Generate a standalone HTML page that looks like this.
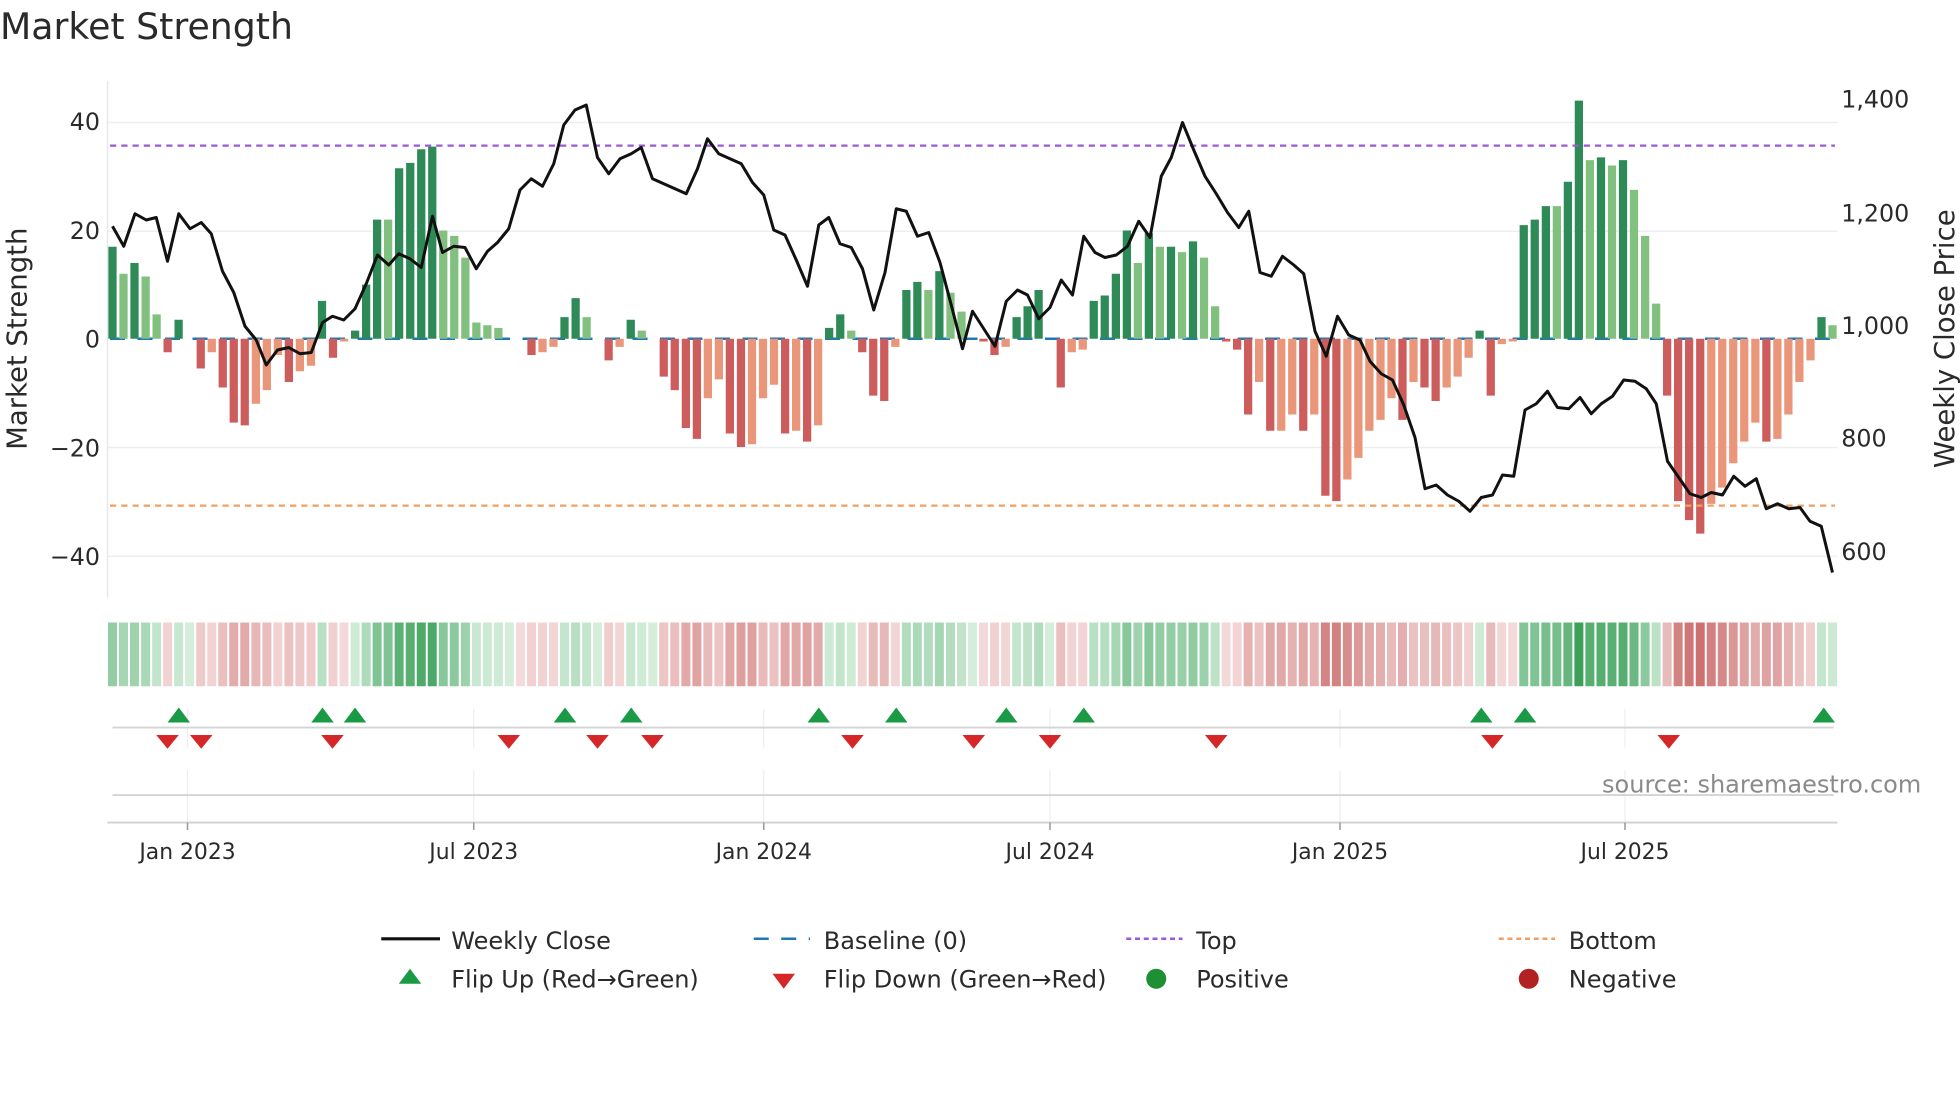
<!DOCTYPE html>
<html><head><meta charset="utf-8">
<style>
html,body{margin:0;padding:0;background:#fff;width:1960px;height:1102px;overflow:hidden}
svg{display:block}
text{font-family:"DejaVu Sans","Liberation Sans",sans-serif;fill:#2a2a2a}
</style></head>
<body>
<svg id="c" width="1960" height="1102" viewBox="0 0 1568 881.6" xmlns="http://www.w3.org/2000/svg">
<rect width="1568" height="882" fill="#fff"/>
<text x="0" y="31" font-size="29" fill="#333">Market Strength</text>
<g stroke="#eceff2" stroke-width="1.2">
<line x1="86" y1="98" x2="1470" y2="98"/><line x1="86" y1="185" x2="1470" y2="185"/>
<line x1="86" y1="358" x2="1470" y2="358"/><line x1="86" y1="445" x2="1470" y2="445"/>
</g>
<line x1="86" y1="65" x2="86" y2="478" stroke="#e6e8ea" stroke-width="1.2"/>
<g font-size="19" text-anchor="end">
<text x="80" y="104">40</text><text x="80" y="191">20</text><text x="80" y="278">0</text>
<text x="80" y="365">−20</text><text x="80" y="452">−40</text>
</g>
<g font-size="19">
<text x="1473" y="86">1,400</text><text x="1473" y="177">1,200</text><text x="1473" y="267">1,000</text>
<text x="1473" y="357">800</text><text x="1473" y="448">600</text>
</g>
<text transform="translate(21,271) rotate(-90)" font-size="22" text-anchor="middle">Market Strength</text>
<text transform="translate(1563,271) rotate(-90)" font-size="22" text-anchor="middle">Weekly Close Price</text>
<line x1="88" y1="271" x2="1468" y2="271" stroke="#1f77b4" stroke-width="2" stroke-dasharray="12 10"/>
<g id="bars"></g>
<line x1="88" y1="116.5" x2="1468" y2="116.5" stroke="#9b59d6" stroke-width="1.8" stroke-dasharray="5 4"/>
<line x1="88" y1="404.5" x2="1468" y2="404.5" stroke="#f0a060" stroke-width="1.8" stroke-dasharray="5 4"/>
<polyline id="price" fill="none" stroke="#111" stroke-width="2.4" stroke-linejoin="round"/>
<g id="heat"></g>
<g stroke="#eceff2" stroke-width="1">
<line x1="150" y1="567" x2="150" y2="598"/><line x1="379" y1="567" x2="379" y2="598"/><line x1="611" y1="567" x2="611" y2="598"/><line x1="840" y1="567" x2="840" y2="598"/><line x1="1072" y1="567" x2="1072" y2="598"/><line x1="1300" y1="567" x2="1300" y2="598"/>
<line x1="150" y1="616" x2="150" y2="658"/><line x1="379" y1="616" x2="379" y2="658"/><line x1="611" y1="616" x2="611" y2="658"/><line x1="840" y1="616" x2="840" y2="658"/><line x1="1072" y1="616" x2="1072" y2="658"/><line x1="1300" y1="616" x2="1300" y2="658"/>
</g>
<line x1="90" y1="582" x2="1467" y2="582" stroke="#d4d4d4" stroke-width="1.5"/>
<line x1="90" y1="636" x2="1467" y2="636" stroke="#d4d4d4" stroke-width="1.5"/>
<line x1="86" y1="658" x2="1470" y2="658" stroke="#d0d0d0" stroke-width="1.5"/>
<g id="tri"></g>
<g stroke="#999" stroke-width="1.2">
<line x1="150" y1="658" x2="150" y2="664"/><line x1="379" y1="658" x2="379" y2="664"/><line x1="611" y1="658" x2="611" y2="664"/><line x1="840" y1="658" x2="840" y2="664"/><line x1="1072" y1="658" x2="1072" y2="664"/><line x1="1300" y1="658" x2="1300" y2="664"/>
</g>
<g font-size="17.5" text-anchor="middle">
<text x="150" y="687">Jan 2023</text><text x="379" y="687">Jul 2023</text><text x="611" y="687">Jan 2024</text><text x="840" y="687">Jul 2024</text><text x="1072" y="687">Jan 2025</text><text x="1300" y="687">Jul 2025</text>
</g>
<text x="1537" y="634" font-size="19.2" text-anchor="end" style="fill:#8a8a8a">source: sharemaestro.com</text>
<g font-size="19.2">
<line x1="305" y1="751" x2="352" y2="751" stroke="#111" stroke-width="2.5"/><text x="361" y="759">Weekly Close</text>
<line x1="603" y1="751" x2="648" y2="751" stroke="#1f77b4" stroke-width="2" stroke-dasharray="12 10"/><text x="659" y="759">Baseline (0)</text>
<line x1="901" y1="751" x2="946" y2="751" stroke="#9b59d6" stroke-width="2" stroke-dasharray="4 3"/><text x="957" y="759">Top</text>
<line x1="1199" y1="751" x2="1244" y2="751" stroke="#f0a060" stroke-width="2" stroke-dasharray="4 3"/><text x="1255" y="759">Bottom</text>
<polygon points="328,775 319,787 337,787" fill="#1a9a45"/><text x="361" y="790">Flip Up (Red→Green)</text>
<polygon points="618,779 636,779 627,791" fill="#d62728"/><text x="659" y="790">Flip Down (Green→Red)</text>
<circle cx="925" cy="783" r="8" fill="#1f8f33"/><text x="957" y="790">Positive</text>
<circle cx="1223" cy="783" r="8" fill="#b22222"/><text x="1255" y="790">Negative</text>
</g>
</svg>
<script>
var d="D17 L12 D14 L11.5 L4.5 R-2.5 D3.5 Z0 R-5.5 O-2.5 R-9 R-15.5 R-16 O-12 O-9.5 O-3 R-8 O-6 O-5 D7 R-3.5 O-0.5 D1.5 D10 D22 L22 D31.5 D32.5 D35 D35.5 L20 L19 L15 L3 L2.5 L2 Z0 Z0 R-3 O-2.5 O-1.5 D4 D7.5 L4 Z0 R-4 O-1.5 D3.5 L1.5 Z0 R-7 R-9.5 R-16.5 R-18.5 O-11 O-7.5 R-17.5 R-20 O-19.5 O-11 O-8.5 R-17.5 O-17 R-19 O-16 D2 D4.5 L1.5 R-2.5 R-10.5 R-11.5 O-1.5 D9 D10.5 L9 D12.5 L8.5 L5 Z0 R-0.5 R-3 O-1.5 D4 D6 D9 Z0 R-9 O-2.5 O-2 D7 D8 D12 D20 L14 D19.5 L17 D17 L16 D18 L15 L6 R-0.5 R-2 R-14 O-8 R-17 O-17 O-14 R-17 O-14 R-29 R-30 O-26 O-22 O-17 O-15 O-11 R-15 O-8 R-9 R-11.5 O-9 O-7 O-3.5 D1.5 R-10.5 O-1 O-0.5 D21 D22 D24.5 L24.5 D29 D44 L33 D33.5 L32 D33 L27.5 L19 L6.5 R-10.5 R-30 R-33.5 R-36 O-30.5 O-27.5 O-23 O-19 O-15.5 R-19 O-18.5 O-14 O-8 O-4 D4 L2.5".split(" ");
var col={D:"#2e8b57",L:"#82c07f",R:"#cd5c5c",O:"#e9967a",Z:"#fff"};
var n=d.length,step=(1466-90)/(n-1),b="",h="";
for(var i=0;i<n;i++){var t=d[i][0],v=parseFloat(d[i].slice(1)),x=90+step*i;
 if(v!=0){var y0=271,y1=271-v*4.33;b+='<rect x="'+(x-3.3).toFixed(1)+'" y="'+Math.min(y0,y1).toFixed(1)+'" width="6.6" height="'+Math.abs(y1-y0).toFixed(1)+'" fill="'+col[t]+'"/>';}
 var a=Math.min(1,Math.abs(v)/40),c;
 if(v>0||(v==0&&i>0&&parseFloat(d[i-1].slice(1))>0)){c="rgb("+Math.round(212-(212-60)*a)+","+Math.round(238-(238-160)*a)+","+Math.round(219-(219-90)*a)+")";}
 else{c="rgb("+Math.round(244-(244-200)*a)+","+Math.round(218-(218-100)*a)+","+Math.round(218-(218-100)*a)+")";}
 h+='<rect x="'+(x-3.6).toFixed(1)+'" y="498" width="7.2" height="51" fill="'+c+'"/>';}
document.getElementById("bars").innerHTML=b;document.getElementById("heat").innerHTML=h;
var p="90,181 99,197 108,171 117,176 125,174 134,209 143,171 152,183 161,178 169,187 178,217 187,234 196,261 205,272 213,292 222,280 231,278 240,283 249,282 258,258 266,253 275,256 284,247 293,227 302,204 311,212 319,203 328,207 337,214 346,173 354,202 363,197 372,198 381,215 390,201 398,194 407,183 416,152 425,143 434,149 443,131 451,100 460,88 469,84 478,126 487,139 496,127 505,123 513,118 522,143 531,147 540,151 549,155 558,135 566,111 575,123 584,127 593,131 602,146 611,156 619,184 628,188 637,208 646,229 655,180 663,174 672,195 681,198 690,215 699,248 708,218 717,167 725,169 734,189 743,186 752,210 761,244 770,279 778,249 787,263 796,277 805,241 814,232 822,236 831,255 840,246 849,224 858,236 867,189 876,202 884,206 893,204 902,197 911,177 920,190 929,141 937,126 946,98 955,120 964,141 973,155 982,170 991,182 999,169 1008,218 1017,221 1026,205 1035,212 1043,219 1052,265 1061,285 1070,253 1079,268 1088,272 1096,289 1105,299 1114,304 1123,324 1132,350 1140,391 1149,388 1158,396 1167,401 1176,409 1185,398 1194,396 1202,380 1211,381 1220,328 1229,323 1238,313 1246,326 1255,327 1264,318 1273,331 1281,323 1290,317 1299,304 1308,305 1317,311 1325,323 1334,369 1343,382 1352,395 1361,398 1369,394 1378,396 1387,381 1396,389 1405,383 1413,407 1422,403 1431,407 1440,406 1448,417 1457,421 1466,458";
document.getElementById("price").setAttribute("points",p);
var up=[143,258,284,452,505,655,717,805,867,1185,1220,1459],dn=[134,161,266,407,478,522,682,779,840,973,1194,1335],s="";
up.forEach(function(x){s+='<polygon points="'+x+',566 '+(x-9)+',578 '+(x+9)+',578" fill="#1a9a45"/>';});
dn.forEach(function(x){s+='<polygon points="'+(x-9)+',588 '+(x+9)+',588 '+x+',599" fill="#d62728"/>';});
document.getElementById("tri").innerHTML=s;
</script>
</body></html>
